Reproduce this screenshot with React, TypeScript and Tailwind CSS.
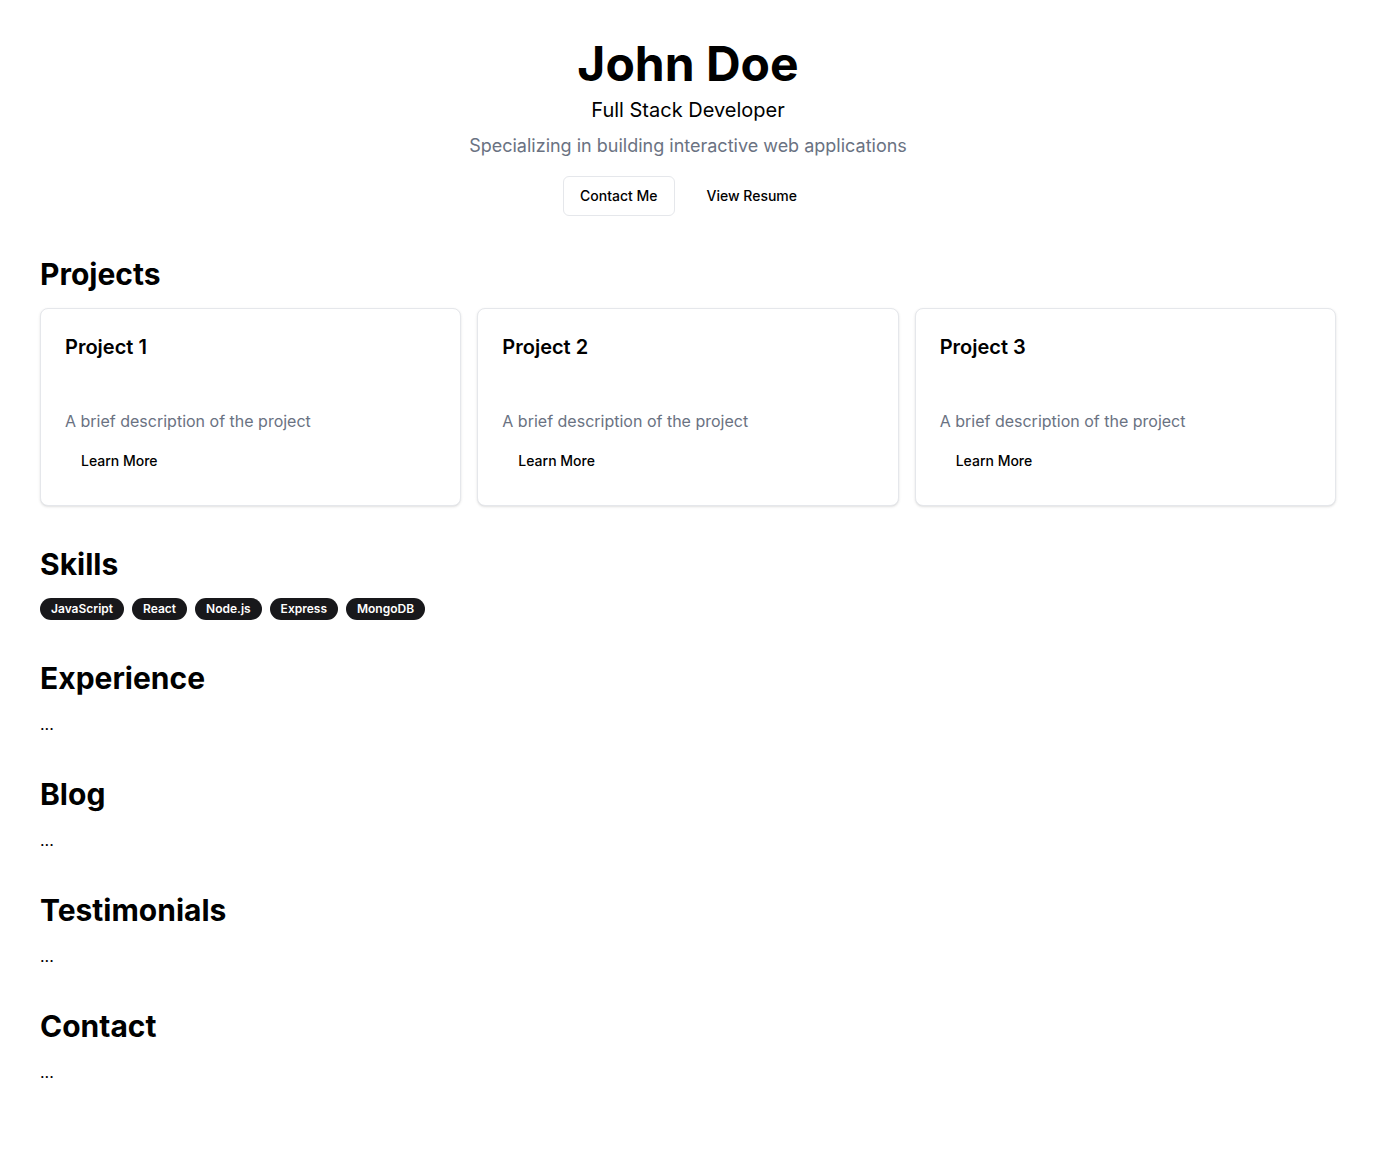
import React from 'react';

const projects = [1, 2, 3];
const skills = ['JavaScript', 'React', 'Node.js', 'Express', 'MongoDB'];

function Section({ title, children }: { title: string; children: React.ReactNode }) {
  return (
    <section>
      <h2 className="text-3xl font-bold mb-4">{title}</h2>
      {children}
    </section>
  );
}

export default function App() {
  return (
    <div className="min-h-screen bg-white text-black font-['Inter',sans-serif] px-10 pt-10 pb-16">
      <header className="flex flex-col items-center text-center">
        <h1 className="text-5xl font-bold leading-none">John Doe</h1>
        <p className="mt-2 text-xl">Full Stack Developer</p>
        <p className="mt-2 text-lg text-gray-500">Specializing in building interactive web applications</p>
        <div className="mt-4 flex gap-4">
          <button className="h-10 px-4 rounded-md border border-gray-200 bg-white text-sm font-medium">Contact Me</button>
          <button className="h-10 px-4 rounded-md text-sm font-medium">View Resume</button>
        </div>
      </header>

      <main className="mt-10 flex flex-col gap-10">
        <Section title="Projects">
          <div className="grid grid-cols-3 gap-4">
            {projects.map((n) => (
              <div key={n} className="rounded-lg border border-gray-200 bg-white shadow-sm">
                <div className="p-6 flex flex-col gap-1.5">
                  <h3 className="text-xl font-semibold">Project {n}</h3>
                  <p className="text-sm h-[18px]"></p>
                </div>
                <div className="px-6 pb-6">
                  <p className="text-base text-gray-500">A brief description of the project</p>
                  <button className="mt-2 h-10 px-4 rounded-md text-sm font-medium">Learn More</button>
                </div>
              </div>
            ))}
          </div>
        </Section>

        <Section title="Skills">
          <div className="flex flex-wrap gap-2">
            {skills.map((s) => (
              <span key={s} className="rounded-full bg-[#18181b] text-white text-xs font-semibold px-[11px] py-[3px]">
                {s}
              </span>
            ))}
          </div>
        </Section>

        <Section title="Experience">
          <p>...</p>
        </Section>
        <Section title="Blog">
          <p>...</p>
        </Section>
        <Section title="Testimonials">
          <p>...</p>
        </Section>
        <Section title="Contact">
          <p>...</p>
        </Section>
      </main>
    </div>
  );
}
